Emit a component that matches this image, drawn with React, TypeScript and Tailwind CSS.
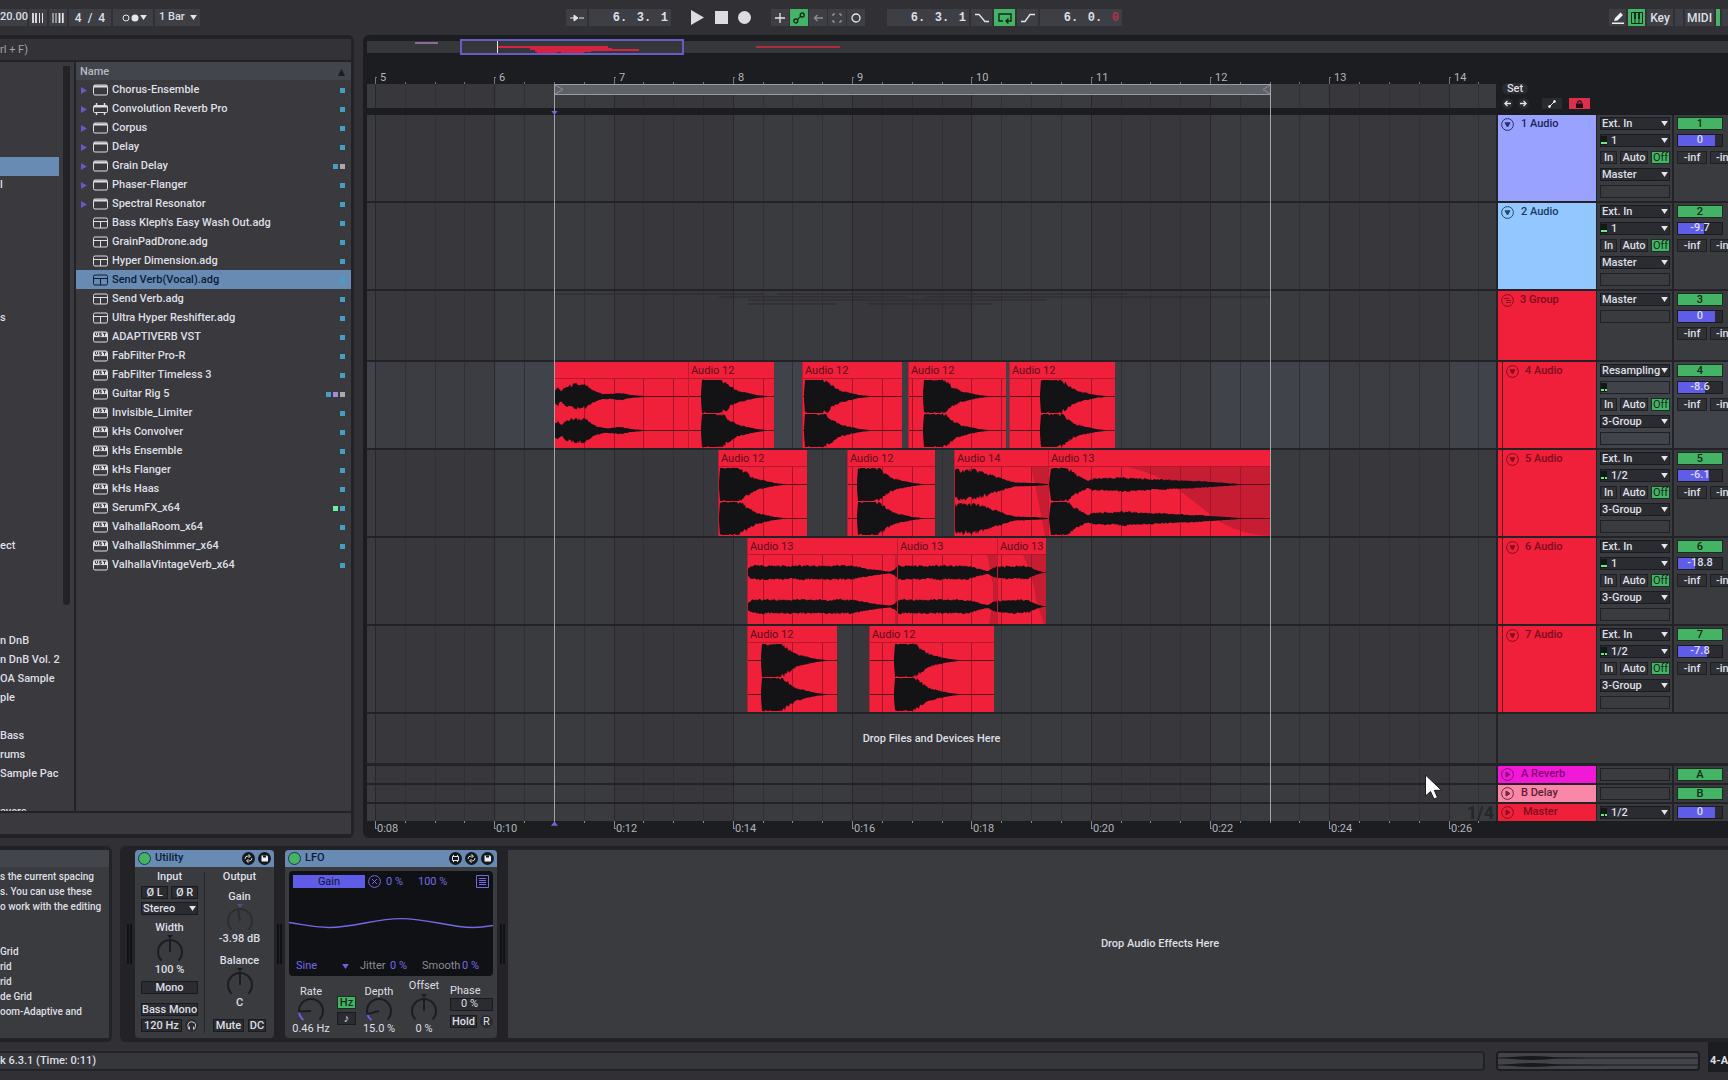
import type { ReactNode } from "react";
import clsx from "clsx";

// timeline scale: px of bar 5 from the lane's left edge, and px per beat
const ORIGIN = 9;
const BEAT = 29.82;
const BEATS = Array.from({ length: 40 }, (_, i) => i);

type Point = [number, number];

interface Clip {
  name?: string;
  x: number;
  w: number;
  wave: Point[];
  fades?: string[];
}

interface Track {
  name: string;
  num: string;
  tone: string;
  kind: "audio" | "group";
  sub?: boolean;
  input?: string;
  channel?: string;
  output: string;
  volume: string;
  level: number;
  clips?: Clip[];
}

const burst = (at: number): Point[] => [
  [at, 3],
  [at + 1, 17],
  [at + 17, 17],
  [at + 24, 13],
  [at + 31, 8],
  [at + 37, 5],
  [at + 46, 3],
  [at + 56, 1],
  [at + 66, 0],
];

const tracks: Track[] = [
  { name: "1 Audio", num: "1", tone: "bg-[#9aa2ff] text-[#20245c]", kind: "audio", input: "Ext. In", channel: "1", output: "Master", volume: "0", level: 84 },
  { name: "2 Audio", num: "2", tone: "bg-[#92c8ff] text-[#1b3a5c]", kind: "audio", input: "Ext. In", channel: "1", output: "Master", volume: "-9.7", level: 60 },
  { name: "3 Group", num: "3", tone: "bg-[#f0203a] text-[#7c0d1c]", kind: "group", output: "Master", volume: "0", level: 84 },
  {
    name: "4 Audio",
    num: "4",
    tone: "bg-[#f0203a] text-[#7c0d1c]",
    kind: "audio",
    sub: true,
    input: "Resampling",
    channel: "",
    output: "3-Group",
    volume: "-8.6",
    level: 62,
    clips: [
      { x: 187, w: 134, wave: [[0, 6], [3, 8], [6, 5], [12, 9], [20, 11], [31, 10], [38, 5], [48, 2], [56, 2], [65, 3], [76, 1], [90, 0]] },
      { name: "Audio 12", x: 321, w: 86, wave: burst(12) },
      { name: "Audio 12", x: 435, w: 100, wave: burst(1) },
      { name: "Audio 12", x: 541, w: 98, wave: burst(14) },
      { name: "Audio 12", x: 642, w: 106, wave: burst(30) },
    ],
  },
  {
    name: "5 Audio",
    num: "5",
    tone: "bg-[#f0203a] text-[#7c0d1c]",
    kind: "audio",
    sub: true,
    input: "Ext. In",
    channel: "1/2",
    output: "3-Group",
    volume: "-6.1",
    level: 70,
    clips: [
      { name: "Audio 12", x: 351, w: 89, wave: burst(0) },
      { name: "Audio 12", x: 480, w: 88, wave: burst(9) },
      { name: "Audio 14", x: 587, w: 94, wave: [[0, 13], [20, 13], [28, 11], [38, 8], [50, 4], [60, 1.5], [80, 1], [93, 0]], fades: ["M76 0 Q83 30 90 69 H94 V0Z"] },
      {
        name: "Audio 13",
        x: 681,
        w: 222,
        wave: [[0, 0], [2, 17], [16, 17], [24, 11], [32, 6], [39, 3], [44, 5], [75, 6], [118, 4], [145, 3], [170, 1.5], [192, 0]],
        fades: ["M79 0 Q110 7 130 23 L171 55 Q195 68 222 69 V0Z"],
      },
    ],
  },
  {
    name: "6 Audio",
    num: "6",
    tone: "bg-[#f0203a] text-[#7c0d1c]",
    kind: "audio",
    sub: true,
    input: "Ext. In",
    channel: "1",
    output: "3-Group",
    volume: "-18.8",
    level: 39,
    clips: [
      { name: "Audio 13", x: 380, w: 150, wave: [[0, 3], [3, 6], [105, 6], [115, 4], [128, 2], [142, 0.5], [146, 2], [150, 6]], fades: ["M147 0 H150 V69 H147Z"] },
      { name: "Audio 13", x: 530, w: 100, wave: [[0, 6], [70, 6], [80, 3], [90, 1], [95, 4], [100, 5]], fades: ["M89 0 L95 30 V45 L91 69 H100 V0Z"] },
      { name: "Audio 13", x: 630, w: 49, wave: [[0, 5], [18, 6], [31, 5], [38, 2], [45, 0]], fades: ["M25 0 Q36 22 38 45 L46 69 H49 V0Z"] },
    ],
  },
  {
    name: "7 Audio",
    num: "7",
    tone: "bg-[#f0203a] text-[#7c0d1c]",
    kind: "audio",
    sub: true,
    input: "Ext. In",
    channel: "1/2",
    output: "3-Group",
    volume: "-7.8",
    level: 65,
    clips: [
      { name: "Audio 12", x: 380, w: 90, wave: burst(13) },
      { name: "Audio 12", x: 502, w: 125, wave: burst(24) },
    ],
  },
];

const returns = [
  { name: "A Reverb", num: "A", tone: "bg-[#f218d8] text-[#7f0a70]" },
  { name: "B Delay", num: "B", tone: "bg-[#f987a8] text-[#5e1c31]" },
];

const devices: { name: string; icon: "device" | "max" | "rack" | "vst"; tags?: string[] }[] = [
  { name: "Chorus-Ensemble", icon: "device" },
  { name: "Convolution Reverb Pro", icon: "max" },
  { name: "Corpus", icon: "device" },
  { name: "Delay", icon: "device" },
  { name: "Grain Delay", icon: "device", tags: ["bg-[#429fc6]", "bg-[#aaaaaa]"] },
  { name: "Phaser-Flanger", icon: "device" },
  { name: "Spectral Resonator", icon: "device" },
  { name: "Bass Kleph's Easy Wash Out.adg", icon: "rack" },
  { name: "GrainPadDrone.adg", icon: "rack" },
  { name: "Hyper Dimension.adg", icon: "rack" },
  { name: "Send Verb(Vocal).adg", icon: "rack" },
  { name: "Send Verb.adg", icon: "rack" },
  { name: "Ultra Hyper Reshifter.adg", icon: "rack" },
  { name: "ADAPTIVERB VST", icon: "vst" },
  { name: "FabFilter Pro-R", icon: "vst" },
  { name: "FabFilter Timeless 3", icon: "vst" },
  { name: "Guitar Rig 5", icon: "vst", tags: ["bg-[#429fc6]", "bg-[#a988dc]", "bg-[#aaaaaa]"] },
  { name: "Invisible_Limiter", icon: "vst" },
  { name: "kHs Convolver", icon: "vst" },
  { name: "kHs Ensemble", icon: "vst" },
  { name: "kHs Flanger", icon: "vst" },
  { name: "kHs Haas", icon: "vst" },
  { name: "SerumFX_x64", icon: "vst", tags: ["bg-[#6df0a0]", "bg-[#429fc6]"] },
  { name: "ValhallaRoom_x64", icon: "vst" },
  { name: "ValhallaShimmer_x64", icon: "vst" },
  { name: "ValhallaVintageVerb_x64", icon: "vst" },
];

// sidebar labels by row; everything else in the list is scrolled out to the left
const places: Record<number, string> = {
  6: "l",
  13: "s",
  25: "ect",
  30: "n DnB",
  31: "n DnB Vol. 2",
  32: "OA Sample",
  33: "ple",
  35: "Bass",
  36: "rums",
  37: "Sample Pac",
  39: "ayers",
};

function noise(i: number) {
  const v = Math.sin(i * 12.9898) * 43758.5453;
  return v - Math.floor(v);
}

function wavePath(points: Point[], cy: number, seed: number) {
  const last = points[points.length - 1][0];
  const top: string[] = [];
  const bottom: string[] = [];
  for (let x = points[0][0]; x <= last; x += 1) {
    let i = 0;
    while (i < points.length - 2 && points[i + 1][0] < x) i++;
    const [x0, a0] = points[i];
    const [x1, a1] = points[i + 1];
    const amp = a0 + ((a1 - a0) * (x - x0)) / (x1 - x0);
    const up = Math.min(16.5, amp * (0.86 + 0.36 * noise(x + seed)) + 0.4);
    const down = Math.min(16.5, amp * (0.86 + 0.36 * noise(x + seed + 77)) + 0.4);
    top.push(`${x} ${(cy - up).toFixed(1)}`);
    bottom.unshift(`${x} ${(cy + down).toFixed(1)}`);
  }
  return `M${top.join("L")}L${bottom.join("L")}Z`;
}

function Caret({ className = "fill-[#e6e6ea]" }: { className?: string }) {
  return (
    <svg viewBox="0 0 8 6" className={clsx("h-[5px] w-[7px] shrink-0", className)}>
      <path d="M0 0H8L4 6Z" />
    </svg>
  );
}

function DeviceIcon({ kind }: { kind: string }) {
  return (
    <svg viewBox="0 0 15 12" className="h-3 w-[15px] shrink-0 fill-none stroke-current">
      {kind === "max" ? (
        <>
          <rect x=".5" y="2.5" width="14" height="7" rx="1" />
          <path d="M1 3.5H14" strokeWidth="2" />
          <path d="M3.5 0V2M11.5 0V2M3.5 10V12M11.5 10V12" strokeWidth="1.4" />
        </>
      ) : (
        <rect x=".5" y="1" width="14" height="10" rx="1.5" />
      )}
      {kind === "device" && <path d="M1 2.5H14" strokeWidth="2" />}
      {kind === "rack" && <path d="M1 4.5H14M7.5 4.5V11" />}
      {kind === "vst" && (
        <>
          <path d="M1 3.8H14" strokeWidth="4.6" />
          <path d="M2.5 2V4L3.5 5L4.5 4V2M8.5 2.4H6.5V3.7H8.3V5H6.3M10 2.4H13M11.5 2.4V5.2" className="stroke-[#2a2a2f]" strokeWidth=".9" />
        </>
      )}
    </svg>
  );
}

function ToolBox({ children, className, label }: { children?: ReactNode; className?: string; label?: string }) {
  return (
    <button aria-label={label} className={clsx("flex h-[17px] items-center justify-center", className ?? "w-[18px] bg-[#3d3f45]")}>
      {children}
    </button>
  );
}

function Position({ values, red }: { values: string[]; red?: boolean }) {
  return (
    <div className="flex h-[17px] w-[82px] items-center justify-end bg-[#3d3f45] pt-px pr-[3px] font-['Liberation_Mono',monospace] text-xs font-bold">
      {values.map((v, i) => (
        <span key={i} className={clsx(i < 2 && "w-6", red && i === 2 && "text-[#b8304a]")}>
          {v}
        </span>
      ))}
    </div>
  );
}

function Toolbar() {
  return (
    <header className="grid h-[35px] shrink-0 grid-cols-[1fr_auto_1fr] items-center text-xs font-medium">
      <div className="flex gap-0.5">
        <span className="flex h-[17px] w-[27px] items-center bg-[#3d3f45] text-[11px]">20.00</span>
        <ToolBox label="Nudge down">
          <svg viewBox="0 0 12 10" className="h-2.5 w-3 stroke-[#e6e6ea]">
            <path d="M1 0V10M4 0V10" strokeWidth="1.8" />
            <path d="M7.5 0V10M10.5 0V10" />
          </svg>
        </ToolBox>
        <ToolBox label="Nudge up">
          <svg viewBox="0 0 12 10" className="h-2.5 w-3 stroke-[#e6e6ea]">
            <path d="M1 0V10M4 0V10" />
            <path d="M7.5 0V10M10.8 0V10" strokeWidth="1.8" />
          </svg>
        </ToolBox>
        <span className="flex h-[17px] w-[42px] items-center justify-center gap-1.5 bg-[#3d3f45]">
          <span>4</span>
          <span>/</span>
          <span>4</span>
        </span>
        <ToolBox label="Metronome" className="w-10 justify-between bg-[#3d3f45] px-1">
          <svg viewBox="0 0 18 8" className="ml-0.5 h-2 w-[18px]">
            <circle cx="4" cy="4" r="3" className="fill-none stroke-[#e6e6ea]" />
            <circle cx="13" cy="4" r="3.5" className="fill-[#e6e6ea]" />
          </svg>
          <Caret />
        </ToolBox>
        <label className="relative flex h-[17px] w-[45px] items-center bg-[#3d3f45]">
          <select aria-label="Quantization" className="w-full appearance-none bg-transparent pl-1 text-[11px] font-medium outline-none">
            <option>1 Bar</option>
          </select>
          <span className="pointer-events-none absolute right-[3px]">
            <Caret />
          </span>
        </label>
      </div>

      <div className="mr-10 flex items-center">
        <ToolBox label="Follow" className="mr-0.5 w-[21px] bg-[#3d3f45]">
          <svg viewBox="0 0 16 8" className="h-2 w-4 fill-[#e6e6ea] stroke-[#e6e6ea]">
            <path d="M1 4H6M10 4H16" strokeDasharray="5 4 2 1 2" />
            <path d="M5 1L9 4L5 7Z" />
          </svg>
        </ToolBox>
        <Position values={["6.", "3.", "1"]} />
        <button aria-label="Play" className="ml-5">
          <svg viewBox="0 0 13 15" className="h-[15px] w-[13px] fill-[#dcdce2]">
            <path d="M0 0L13 7.5L0 15Z" />
          </svg>
        </button>
        <button aria-label="Stop" className="ml-[11px] size-[13px] bg-[#dcdce2]" />
        <button aria-label="Record" className="ml-2.5 size-[13px] rounded-full bg-[#dcdce2]" />
        <div className="ml-5 flex gap-px">
          <ToolBox label="Overdub">
            <svg viewBox="0 0 10 10" className="size-2.5 stroke-[#e6e6ea]">
              <path d="M5 0V10M0 5H10" strokeWidth="1.3" />
            </svg>
          </ToolBox>
          <ToolBox label="Automation arm" className="w-[18px] bg-[#45b365]">
            <svg viewBox="0 0 12 12" className="size-3 fill-none stroke-[#0f2b17]" strokeWidth="1.3">
              <circle cx="2.8" cy="9" r="2" />
              <circle cx="9.2" cy="3" r="2" />
              <path d="M4.3 7.6L7.7 4.4" />
            </svg>
          </ToolBox>
          <ToolBox label="Re-enable automation">
            <svg viewBox="0 0 10 8" className="h-2 w-2.5 fill-none stroke-[#8b8c92]">
              <path d="M10 4H2M4.5 1L1.5 4L4.5 7" strokeWidth="1.4" />
            </svg>
          </ToolBox>
          <ToolBox label="Capture">
            <svg viewBox="0 0 10 10" className="size-2.5 fill-none stroke-[#a9aab0]">
              <path d="M1 3V1H3M7 1H9V3M9 7V9H7M3 9H1V7" />
            </svg>
          </ToolBox>
          <ToolBox label="Session record">
            <svg viewBox="0 0 10 10" className="size-2.5 fill-none stroke-[#e6e6ea]">
              <circle cx="5" cy="5" r="4" strokeWidth="1.3" />
            </svg>
          </ToolBox>
        </div>
        <div className="ml-[22px] flex gap-0.5">
          <Position values={["6.", "3.", "1"]} />
          <ToolBox label="Punch in" className="w-[21px] bg-[#3d3f45]">
            <svg viewBox="0 0 14 10" className="h-2.5 w-3.5 fill-none stroke-[#e6e6ea]" strokeWidth="1.3">
              <path d="M0 1.5H4L10 8.5H14" />
            </svg>
          </ToolBox>
          <ToolBox label="Loop" className="w-[21px] bg-[#45b365]">
            <svg viewBox="0 0 14 12" className="h-3 w-3.5 fill-none stroke-[#0f2b17]" strokeWidth="1.4">
              <path d="M5 9H1V2H13V9H8M10.5 6.5L8 9L10.5 11.5" />
            </svg>
          </ToolBox>
          <ToolBox label="Punch out" className="w-[21px] bg-[#3d3f45]">
            <svg viewBox="0 0 14 10" className="h-2.5 w-3.5 fill-none stroke-[#e6e6ea]" strokeWidth="1.3">
              <path d="M0 8.5H4L9 1.5H14" />
            </svg>
          </ToolBox>
          <Position values={["6.", "0.", "0"]} red />
        </div>
      </div>

      <div className="flex justify-end gap-0.5">
        <ToolBox label="Draw mode" className="w-[17px] bg-[#3d3f45]">
          <svg viewBox="0 0 12 12" className="size-3 fill-[#f0f0f4]">
            <path d="M2 9L3 6L8.5 .5L11 3L5.5 8.5ZM0 10.5H12V12H0Z" />
          </svg>
        </ToolBox>
        <ToolBox label="Computer keyboard" className="w-[17px] bg-[#45b365]">
          <svg viewBox="0 0 12 12" className="size-3 fill-none stroke-[#0f2b17]">
            <path d="M.5 .5H11.5V11.5H.5ZM4 6V11.5M8 6V11.5" />
            <path d="M4 1V7M8 1V7" strokeWidth="2" />
          </svg>
        </ToolBox>
        <ToolBox className="w-[26px] bg-[#3d3f45]">Key</ToolBox>
        <span className="h-[17px] w-2 bg-[#3d3f45]" />
        <ToolBox className="w-[29px] bg-[#3d3f45]">MIDI</ToolBox>
        <span className="h-[17px] w-1 bg-[#45b365]" />
        <span className="h-[17px] w-1.5 bg-[#3d3f45]" />
      </div>
    </header>
  );
}

function Browser() {
  return (
    <aside className="flex w-[354px] shrink-0 flex-col rounded-r-md bg-[#222227] pt-1 pr-[3px] pb-1">
      <input
        aria-label="Search"
        placeholder="rl + F)"
        className="mb-0.5 h-[21px] w-full bg-[#323237] text-[11px] outline-none placeholder:text-[#a2a3a8]"
      />
      <div className="flex min-h-0 flex-1 border-b-2 border-[#222227]">
        <nav className="h-full w-[62px] overflow-hidden bg-[#39393e] pr-[3px]">
          <ul className="text-[11px] font-medium">
            {Array.from({ length: 40 }, (_, i) => (
              <li key={i} className={clsx("h-[19px] leading-[18px] whitespace-nowrap", i === 5 && "bg-[#688bb3]")}>
                {places[i]}
              </li>
            ))}
          </ul>
        </nav>
        <div className="w-3 bg-[#39393e] pt-1">
          <div className="ml-px h-[539px] w-[7px] rounded-b-md bg-[#222227]" />
        </div>
        <div className="ml-0.5 min-w-0 flex-1 bg-[#39393e]">
          <div className="flex h-[18px] items-center justify-between bg-[#42454c] pt-0.5 pr-1.5 pl-1 text-[11px] font-medium text-[#b9bac0]">
            Name
            <svg viewBox="0 0 8 8" className="size-[7px] fill-[#1c1d21]">
              <path d="M4 0L8 8H0Z" />
            </svg>
          </div>
          <ul className="text-[11px] font-medium">
            {devices.map((d) => {
              const selected = d.name === "Send Verb(Vocal).adg";
              const folder = d.icon === "device" || d.icon === "max";
              return (
                <li key={d.name} className={clsx("flex h-[19px] items-center pt-px pr-1.5 pl-[5px]", selected && "bg-[#688bb3] text-[#0c1c38]")}>
                  <span className="w-3">
                    {folder && (
                      <svg viewBox="0 0 6 7" className="h-[7px] w-1.5 fill-[#655bc4]">
                        <path d="M0 0L6 3.5L0 7Z" />
                      </svg>
                    )}
                  </span>
                  <DeviceIcon kind={d.icon} />
                  <span className="ml-1 flex-1 whitespace-nowrap">{d.name}</span>
                  <span className="flex gap-0.5">
                    {(d.tags ?? ["bg-[#429fc6]"]).map((t) => (
                      <span key={t} className={clsx("size-[5px]", t)} />
                    ))}
                  </span>
                </li>
              );
            })}
          </ul>
        </div>
      </div>
      <div className="h-[21px] bg-[#39393e]" />
    </aside>
  );
}

function Grid({ light }: { light?: boolean }) {
  return (
    <svg className={clsx("absolute inset-0 h-full w-full", light ? "bg-[#40444a]" : "bg-[#3a3b3f]")}>
      {[0, 2, 4, 6, 8].map((b) => (
        <rect key={b} x={ORIGIN + b * 4 * BEAT} y="0" width={4 * BEAT} height="100%" className="fill-[#333237]/35" />
      ))}
      {BEATS.map((b) => (
        <rect
          key={b}
          x={Math.round(ORIGIN + b * BEAT) - 1}
          y="0"
          width="1"
          height="100%"
          className={b % 4 ? "fill-[#303035]" : "fill-[#27272c]"}
        />
      ))}
    </svg>
  );
}

function ClipView({ clip, seed }: { clip: Clip; seed: number }) {
  return (
    <div
      className="absolute top-0 bottom-0 overflow-hidden border-l border-[#c01a30] bg-[#f0203a]"
      style={{ left: clip.x, width: clip.w }}
    >
      <div className="h-[17px] border-b border-[#b5182c] pl-0.5 text-[11px] leading-[18px] whitespace-nowrap text-[#5c0d19]">{clip.name}</div>
      <svg viewBox={`0 0 ${clip.w} 69`} className="block h-[69px]" width={clip.w}>
        {clip.fades?.map((d) => (
          <path key={d} d={d} className="fill-[#c61d33]" />
        ))}
        {BEATS.map((b) => {
          const x = Math.round(ORIGIN + b * BEAT) - clip.x - 2;
          return x > 0 && x < clip.w ? <rect key={b} x={x} y="0" width="1" height="69" className="fill-[#a5152a]" /> : null;
        })}
        <path d={`M0 17.5H${clip.w}M0 51.5H${clip.w}`} className="stroke-[#55101a]" />
        <path d={wavePath(clip.wave, 17.5, seed)} className="fill-[#131316]" />
        <path d={wavePath(clip.wave, 51.5, seed + 40)} className="fill-[#131316]" />
      </svg>
    </div>
  );
}

function FoldIcon({ kind }: { kind: "down" | "group" | "right" }) {
  return (
    <svg viewBox="0 0 13 13" className="size-[13px] shrink-0 fill-none stroke-current opacity-90">
      <circle cx="6.5" cy="6.5" r="5.9" />
      {kind === "down" && <path d="M4 4.8H9L6.5 9Z" className="fill-current" />}
      {kind === "right" && <path d="M5 4V9L9 6.5Z" className="fill-current" />}
      {kind === "group" && <path d="M3 4.5H8M5 6.5H10M5 8.5H10" />}
    </svg>
  );
}

function Dropdown({ value, label, meter, className }: { value: string; label: string; meter?: number; className?: string }) {
  return (
    <label className={clsx("relative flex h-[13px] items-center border border-[#1a1b1f] bg-[#2b2c31]", className ?? "w-[70px]")}>
      {meter !== undefined && <Meter channels={meter} />}
      <select
        aria-label={label}
        className={clsx("h-full min-w-0 flex-1 appearance-none bg-transparent text-[11px] leading-[11px] font-medium outline-none", meter ? "pl-1" : "pl-px")}
      >
        <option>{value}</option>
      </select>
      <span className="pointer-events-none absolute right-px flex">
        <Caret />
      </span>
    </label>
  );
}

function Meter({ channels }: { channels: number }) {
  return (
    <span className="flex h-[9px] w-1.5 shrink-0 items-end gap-px bg-[#0e1a12] pb-px">
      {Array.from({ length: channels }, (_, i) => (
        <span key={i} className="h-0.5 flex-1 bg-[#6ee887]" />
      ))}
    </span>
  );
}

function EmptyField() {
  return <div className="h-[13px] w-[70px] border border-[#1f2024]" />;
}

function Volume({ value, level, label }: { value: string; level: number; label: string }) {
  return (
    <div className="relative h-[13px] w-[46px] border border-[#1a1b1f] bg-[#2b2c31]">
      <div className="h-full bg-[#5f5ce8]" style={{ width: `${level}%` }} />
      <input
        aria-label={label}
        defaultValue={value}
        className="absolute inset-0 w-full bg-transparent text-center text-[11px] font-medium text-[#dcdcf4] outline-none"
      />
    </div>
  );
}

function Activator({ children }: { children: ReactNode }) {
  return <button className="h-[13px] w-[46px] border border-[#15301c] bg-[#45b365] text-[11px] leading-[11px] font-medium text-[#0f2b17]">{children}</button>;
}

function TrackRow({ track, seed }: { track: Track; seed: number }) {
  const armed = track.name === "4 Audio";
  const cell = armed ? "bg-[#40444a]" : "bg-[#3a3b3f]";
  const small = "h-[13px] border border-[#1f2024] bg-[#303136] text-[11px] leading-[11px] font-medium";
  return (
    <div className={clsx("flex shrink-0 border-b-2 border-[#222227]", track.kind === "group" ? "h-[71px]" : "h-[88px]")}>
      <div className="relative min-w-0 flex-1 overflow-hidden">
        <Grid light={armed} />
        {track.kind === "group" && (
          <svg className="absolute inset-0 h-full w-full fill-[#2c2c31]/60">
            <path d="M188 2H396V4H188ZM410 2H760V4H410ZM352 5H540V7H352ZM560 5H903V7H560ZM381 8H680V10H381ZM381 12H470V14H381ZM502 12H626V14H502Z" />
          </svg>
        )}
        {track.clips?.map((c, i) => <ClipView key={i} clip={c} seed={seed * 100 + i * 13} />)}
      </div>
      <div className={clsx("ml-0.5 flex w-[98px] shrink-0", track.tone)}>
        {track.sub && <div className="w-[5px] shrink-0 border-r border-[#5c0d19]" />}
        <div className={clsx("flex h-[18px] items-center pl-[3px] text-[11px] font-medium whitespace-nowrap", track.tone.includes("f0203a") ? "gap-1.5" : "gap-[7px]")}>
          <FoldIcon kind={track.kind === "group" ? "group" : "down"} />
          {track.name}
        </div>
      </div>
      <div className={clsx("ml-px flex w-[75px] shrink-0 flex-col gap-1 pt-0.5 pl-[3px]", cell)}>
        {track.kind === "group" ? (
          <>
            <Dropdown value={track.output} label={`${track.name} output`} />
            <EmptyField />
          </>
        ) : (
          <>
            <Dropdown value={track.input!} label={`${track.name} input`} />
            {track.channel ? (
              <Dropdown value={track.channel} label={`${track.name} channel`} meter={track.channel === "1" ? 1 : 2} />
            ) : (
              <div className="flex h-[13px] w-[70px] items-center border border-[#1f2024]">
                <Meter channels={2} />
              </div>
            )}
            <div className="flex w-[70px] justify-between">
              <button className={clsx(small, "w-[17px]")}>In</button>
              <button className={clsx(small, "w-7")}>Auto</button>
              <button className="h-[13px] w-[19px] border border-[#15301c] bg-[#45b365] text-[11px] leading-[11px] text-[#0f2b17]">Off</button>
            </div>
            <Dropdown value={track.output} label={`${track.name} output`} />
            <EmptyField />
          </>
        )}
      </div>
      <div className={clsx("ml-0.5 flex w-[54px] shrink-0 flex-col gap-1 overflow-hidden pt-0.5 pl-[3px]", cell)}>
        <Activator>{track.num}</Activator>
        <Volume value={track.volume} level={track.level} label={`${track.name} volume`} />
        <div className="flex w-[63px] gap-[3px]">
          <div className={clsx(small, "w-[30px] text-center")}>-inf</div>
          <div className={clsx(small, "w-[30px] pl-[5px]")}>-in</div>
        </div>
      </div>
    </div>
  );
}

function ThinRow({ name, tone, children, last, mixer }: { name: string; tone: string; children: ReactNode; mixer: ReactNode; last?: boolean }) {
  return (
    <div className={clsx("flex shrink-0 border-[#222227]", last ? "h-[17px]" : "h-[19px] border-b-2")}>
      <div className="relative min-w-0 flex-1 overflow-hidden">
        <Grid />
        {last && <span className="absolute right-0.5 bottom-0 text-lg leading-[17px] font-bold text-[#25262a]">1/4</span>}
      </div>
      <div className={clsx("ml-0.5 flex w-[98px] shrink-0 items-center pl-[3px] text-[11px] font-medium", tone, last ? "gap-[9px]" : "gap-[7px]")}>
        <FoldIcon kind="right" />
        {name}
      </div>
      <div className="ml-px flex w-[75px] shrink-0 items-center bg-[#3a3b3f] pl-[3px]">{children}</div>
      <div className="ml-0.5 flex w-[54px] shrink-0 items-center bg-[#3a3b3f] pl-[3px]">{mixer}</div>
    </div>
  );
}

function Overview() {
  return (
    <div className="relative h-3 shrink-0 bg-[#36373b]">
      <svg className="absolute -top-1 left-0 h-5 w-full">
        <rect x="48" y="5" width="23" height="2" className="fill-[#8e6a96]" />
        <rect x="389" y="9" width="84" height="2" className="fill-[#b02c40]" />
        <path
          d="M130 9H241V11H130ZM163 11H245V13H163ZM200 12H272V14H200ZM168 13H224V15H168ZM170 15H190V17H170ZM194 15H217V17H194ZM150 9H175V11H150Z"
          className="fill-[#d42440]"
        />
        <rect x="130" y="3" width="1" height="14" className="fill-[#e6e6ea]" />
        <rect x="94" y="3" width="222" height="14" className="fill-none stroke-[#665cc8]" strokeWidth="2" />
      </svg>
    </div>
  );
}

function Ruler() {
  return (
    <div className="flex h-[62px] shrink-0">
      <div className="relative flex min-w-0 flex-1 flex-col overflow-hidden">
        <div className="relative h-[31px]">
          <svg className="absolute inset-0 h-full w-full fill-[#77787e]">
            {BEATS.map((b) => {
              const x = Math.round(ORIGIN + b * BEAT) - 1;
              return b % 4 ? <rect key={b} x={x} y="29" width="1" height="2" /> : <path key={b} d={`M${x} 24H${x + 2}V25H${x + 1}V31H${x}Z`} />;
            })}
          </svg>
          {[5, 6, 7, 8, 9, 10, 11, 12, 13, 14].map((bar, i) => (
            <span
              key={bar}
              className="absolute bottom-0 text-[11px] leading-3 text-[#b3b4b9]"
              style={{ left: Math.round(ORIGIN + i * 4 * BEAT) + 4 }}
            >
              {bar}
            </span>
          ))}
        </div>
        <div className="relative h-6 overflow-hidden">
          <Grid />
          <div className="absolute top-0 left-[187px] flex h-[11px] w-[717px] items-center justify-between border-y border-[#9a9ca4] bg-[#5e6168]">
            <svg viewBox="0 0 10 9" className="h-[9px] w-2.5 fill-none stroke-[#8f9199]">
              <path d="M1 0L9 4.5L1 9" />
            </svg>
            <svg viewBox="0 0 10 9" className="h-[9px] w-2.5 fill-none stroke-[#8f9199]">
              <path d="M9 0L2 4.5L9 9" />
            </svg>
          </div>
        </div>
      </div>
      <div className="ml-0.5 w-[230px] pt-[30px] pl-1">
        <button className="block h-[11px] w-[26px] rounded-full bg-[#2a2b2f] text-[11px] leading-[11px] font-medium">Set</button>
        <div className="mt-1 flex h-[11px] items-center text-[#e6e6ea]">
          <button aria-label="Previous locator" className="flex size-[11px] items-center justify-center rounded-full bg-[#2a2b2f]">
            <svg viewBox="0 0 8 8" className="size-[7px] fill-none stroke-current" strokeWidth="1.6">
              <path d="M8 4H1.5M4 1L1 4L4 7" />
            </svg>
          </button>
          <button aria-label="Next locator" className="ml-[5px] flex size-[11px] items-center justify-center rounded-full bg-[#2a2b2f]">
            <svg viewBox="0 0 8 8" className="size-[7px] fill-none stroke-current" strokeWidth="1.6">
              <path d="M0 4H6.5M4 1L7 4L4 7" />
            </svg>
          </button>
          <button aria-label="Automation mode" className="ml-[13px] flex h-[11px] w-5 items-center justify-center bg-[#2a2b2f]">
            <svg viewBox="0 0 8 8" className="size-2 fill-current stroke-current">
              <path d="M1.5 6.5L6.5 1.5" />
              <circle cx="1.5" cy="6.5" r="1" />
              <circle cx="6.5" cy="1.5" r="1" />
            </svg>
          </button>
          <button aria-label="Lock envelopes" className="ml-[7px] flex h-[11px] w-[21px] items-center justify-center bg-[#dc2f4c]">
            <svg viewBox="0 0 8 9" className="h-2 w-[7px] fill-[#1c1015]">
              <path d="M0 4H8V9H0Z" />
              <path d="M2 4V2.5Q2 1 4 1T6 2.5V4" className="fill-none stroke-[#1c1015]" strokeWidth="1.3" />
            </svg>
          </button>
        </div>
      </div>
    </div>
  );
}

function TimeRuler() {
  return (
    <div className="relative h-[17px] shrink-0 overflow-hidden">
      <svg className="absolute inset-0 h-full w-full fill-[#8b8c92]">
        {BEATS.slice(0, 38).map((b) => {
          const x = Math.round(ORIGIN + b * BEAT) - 1;
          return b % 4 ? <rect key={b} x={x} y="0" width="1" height="2" /> : <path key={b} d={`M${x} 0H${x + 1}V7H${x + 2}V8H${x}Z`} />;
        })}
      </svg>
      {["0:08", "0:10", "0:12", "0:14", "0:16", "0:18", "0:20", "0:22", "0:24", "0:26"].map((t, i) => (
        <span key={t} className="absolute top-px text-[11px] leading-[14px] text-[#b3b4b9]" style={{ left: Math.round(ORIGIN + i * 4 * BEAT) + 1 }}>
          {t}
        </span>
      ))}
    </div>
  );
}

function Arrangement() {
  return (
    <main className="relative ml-[9px] flex min-w-0 flex-1 flex-col overflow-hidden rounded-l-md bg-[#1c1d21] pt-1.5 pl-1">
      <Overview />
      <Ruler />
      <div className="flex min-h-0 flex-1 flex-col bg-[#222227]">
        {tracks.map((t, i) => (
          <TrackRow key={t.name} track={t} seed={i} />
        ))}
        <div className="flex min-h-0 flex-1 border-b-[3px] border-[#222227]">
          <div className="relative flex min-w-0 flex-1 items-center justify-center overflow-hidden pt-0.5">
            <Grid />
            <span className="relative text-[11px] font-medium">Drop Files and Devices Here</span>
          </div>
          <div className="ml-0.5 w-[230px] shrink-0 bg-[#3a3b3f]" />
        </div>
        {returns.map((r) => (
          <ThinRow key={r.name} name={r.name} tone={r.tone} mixer={<Activator>{r.num}</Activator>}>
            <EmptyField />
          </ThinRow>
        ))}
        <ThinRow name="Master" tone="bg-[#f0203a] text-[#7c0d1c]" last mixer={<Volume value="0" level={84} label="Master volume" />}>
          <Dropdown value="1/2" label="Master output" meter={2} />
        </ThinRow>
      </div>
      <TimeRuler />

      {/* insert marker and loop end */}
      <div className="pointer-events-none absolute top-[49px] bottom-[17px] left-[191px] w-px bg-[#a4a5aa]" />
      <div className="pointer-events-none absolute top-[49px] bottom-[17px] left-[907px] w-px bg-[#a4a5aa]" />
      <svg viewBox="0 0 8 5" className="pointer-events-none absolute top-[76px] left-[188px] h-1 w-[7px] fill-[#6f66d8]">
        <path d="M0 0H8L4 5Z" />
      </svg>
      <svg viewBox="0 0 8 5" className="pointer-events-none absolute bottom-3 left-[188px] h-[5px] w-[7px] fill-[#6f66d8]">
        <path d="M0 5H8L4 0Z" />
      </svg>
      <svg viewBox="0 0 17 26" className="pointer-events-none absolute top-[739px] left-[1062px] h-[26px] w-[17px] fill-white stroke-[#1c1d21]">
        <path d="M.5 1V22L5.5 17.5L9 25L12.5 23.5L9.3 16.3H16.5Z" />
      </svg>
    </main>
  );
}

function Knob({ angle = 0, arc, faint, marker }: { angle?: number; arc?: string; faint?: boolean; marker?: boolean }) {
  return (
    <svg viewBox="0 0 30 27" className={clsx("block h-[27px] w-[30px] shrink-0 fill-none stroke-[#1c1d21] stroke-2", faint && "opacity-45")}>
      <path d="M6.5 25.5A12 12 0 1 1 23.5 25.5" />
      {arc && <path d={arc} className="stroke-[#6a62e0]" />}
      <path d="M15 17V6" transform={`rotate(${angle} 15 17)`} />
      {marker && <path d="M12 0H18L15 4Z" className={faint ? "fill-[#6a62e0] stroke-none" : "fill-[#1c1d21] stroke-none"} />}
    </svg>
  );
}

function PadButton({ children, className }: { children: ReactNode; className?: string }) {
  return (
    <button
      className={clsx("h-[13px] border text-[11px] leading-[11px] font-medium whitespace-nowrap", className, !className?.includes("bg-") && "border-[#1a1b1f] bg-[#2b2c31]")}
    >
      {children}
    </button>
  );
}

function DeviceHeader({ title, max }: { title: string; max?: boolean }) {
  return (
    <div className="flex h-[17px] shrink-0 items-center gap-[3px] rounded-t bg-[#688bb3] px-[3px] text-[11px] font-medium text-[#0c1c38]">
      <button aria-label={`${title} on`} className="mr-px size-[13px] rounded-full border border-[#1b3a4a] bg-[#45b365]" />
      <span className="flex-1">{title}</span>
      {max && (
        <svg viewBox="0 0 13 13" className="size-[13px]">
          <circle cx="6.5" cy="6.5" r="6.5" className="fill-[#16181f]" />
          <path d="M3.5 4.5H9.5V8.5H3.5ZM4.5 3V4.5M8.5 3V4.5M4.5 8.5V10M8.5 8.5V10" className="fill-none stroke-[#e6e6ea]" />
        </svg>
      )}
      <svg viewBox="0 0 13 13" className="size-[13px]">
        <circle cx="6.5" cy="6.5" r="6.5" className="fill-[#16181f]" />
        <path d="M3 7Q3 4 6 4L8 4M10 6Q10 9 7 9L5 9M6.5 2.5L8.5 4L6.5 6M6.5 7L4.5 9L6.5 10.5" className="fill-none stroke-[#d8d2c8]" />
      </svg>
      <svg viewBox="0 0 13 13" className="size-[13px]">
        <circle cx="6.5" cy="6.5" r="6.5" className="fill-[#16181f]" />
        <path d="M3.5 3.5H9L10 4.5V9.5H3.5Z" className="fill-[#f0f0f4]" />
        <path d="M5 3.5H8V5.5H5Z" className="fill-[#16181f]" />
      </svg>
    </div>
  );
}

function LevelStrip() {
  return (
    <div className="flex w-[11px] shrink-0 items-center justify-center gap-px">
      <span className="h-10 w-0.5 bg-[#101114]" />
      <span className="h-10 w-0.5 bg-[#101114]" />
    </div>
  );
}

function Utility() {
  return (
    <section className="flex w-[139px] shrink-0 flex-col rounded bg-[#3a3b3f] text-[11px] font-medium">
      <DeviceHeader title="Utility" />
      <div className="flex flex-1">
        <div className="flex w-[69px] flex-col items-center px-1.5">
          <h3 className="h-[18px] leading-5">Input</h3>
          <div className="mt-px flex w-full justify-between">
            <PadButton className="w-[27px]">Ø L</PadButton>
            <PadButton className="w-[27px]">Ø R</PadButton>
          </div>
          <Dropdown value="Stereo" label="Channel mode" className="mt-[3px] w-full" />
          <span className="mt-[5px] leading-[15px]">Width</span>
          <Knob marker />
          <span className="leading-[15px]">100 %</span>
          <PadButton className="mt-1 w-full">Mono</PadButton>
          <PadButton className="mt-[9px] w-full">Bass Mono</PadButton>
          <div className="mt-[3px] flex w-full items-center justify-between">
            <PadButton className="w-[41px]">120 Hz</PadButton>
            <button aria-label="Bass listen" className="size-[13px] rounded-full bg-[#2b2c31] p-0.5">
              <svg viewBox="0 0 9 9" className="size-[9px] fill-none stroke-[#c9c9ce]">
                <path d="M2.5 8H1.5Q0 3 2 1.5T7 1.5T7.5 8H6.5M2.5 5.5V8.5M6.5 5.5V8.5" />
              </svg>
            </button>
          </div>
        </div>
        <div className="my-[5px] w-px bg-[#222227]" />
        <div className="flex flex-1 flex-col items-center">
          <h3 className="h-[18px] leading-5">Output</h3>
          <span className="mt-1 leading-[15px]">Gain</span>
          <Knob marker faint angle={-10} />
          <span className="leading-[15px]">-3.98 dB</span>
          <span className="mt-[7px] leading-[15px]">Balance</span>
          <Knob marker />
          <span className="leading-[15px]">C</span>
          <div className="mt-[9px] flex w-full justify-between px-2">
            <PadButton className="w-[31px]">Mute</PadButton>
            <PadButton className="w-[18px]">DC</PadButton>
          </div>
        </div>
      </div>
    </section>
  );
}

function Lfo() {
  return (
    <section className="flex w-[212px] shrink-0 flex-col rounded bg-[#3a3b3f] text-[11px]">
      <DeviceHeader title="LFO" max />
      <div className="mx-1 mt-1 flex h-[105px] flex-col rounded-sm bg-[#101114] text-[#7169e6]">
        <div className="flex items-center px-1 pt-1">
          <button className="h-[13px] w-[72px] bg-[#5f5ce8] text-[11px] leading-[13px] text-[#14152a]">Gain</button>
          <svg viewBox="0 0 13 13" className="ml-[3px] size-[13px] fill-none stroke-current">
            <circle cx="6.5" cy="6.5" r="5.9" />
            <path d="M4 4L9 9M9 4L4 9" />
          </svg>
          <span className="ml-[5px] w-8 leading-[13px]">0 %</span>
          <span className="flex-1 leading-[13px]">100 %</span>
          <svg viewBox="0 0 13 13" className="size-[13px] fill-none stroke-current">
            <path d="M.5 .5H12.5V12.5H.5ZM3 3.5H10M3 5.5H10M3 7.5H10M3 9.5H10" />
          </svg>
        </div>
        <svg viewBox="0 0 204 72" preserveAspectRatio="none" className="min-h-0 w-full flex-1 fill-none stroke-current" strokeWidth="1.4">
          <path d="M0 35C14 37 24 40 40 40C66 40 86 31 112 31C140 31 160 40 184 40C192 40 198 39 204 38" />
        </svg>
        <div className="flex items-center pb-[3px] pl-[7px] leading-[14px] whitespace-nowrap">
          <span className="w-[46px]">Sine</span>
          <Caret className="mr-[11px] fill-[#6a62e0]" />
          <span className="w-[30px] text-[#8c8c94]">Jitter</span>
          <span className="w-8">0 %</span>
          <span className="w-10 text-[#8c8c94]">Smooth</span>
          <span>0 %</span>
        </div>
      </div>
      <div className="flex flex-1">
        <div className="mt-2 flex w-[52px] flex-col items-center">
          <span className="mb-[-5px] leading-[15px]">Rate</span>
          <Knob angle={-92} arc="M3 18.5A12 12 0 0 0 7.5 26" />
          <span className="leading-[15px] whitespace-nowrap">0.46 Hz</span>
        </div>
        <div className="mt-5 flex w-[19px] flex-col gap-[3px]">
          <PadButton className="w-[19px] border-[#15301c] bg-[#45b365] text-[#0f2b17]">Hz</PadButton>
          <PadButton className="w-[19px]">♪</PadButton>
        </div>
        <div className="mt-2 flex w-[46px] flex-col items-center">
          <span className="mb-[-5px] leading-[15px]">Depth</span>
          <Knob angle={-105} arc="M3.5 21A12 12 0 0 0 7.5 26" />
          <span className="leading-[15px] whitespace-nowrap">15.0 %</span>
        </div>
        <div className="mt-0.5 flex w-11 flex-col items-center">
          <span className="mb-px leading-[15px]">Offset</span>
          <Knob marker />
          <span className="leading-[15px]">0 %</span>
        </div>
        <div className="mt-2 ml-1 w-[43px]">
          <span className="block leading-[14px]">Phase</span>
          <input aria-label="Phase" defaultValue="0 %" className="block h-[13px] w-full border border-[#1a1b1f] bg-[#2b2c31] pr-1 text-center text-[11px] outline-none" />
          <div className="mt-1 flex items-center justify-between">
            <PadButton className="w-[27px]">Hold</PadButton>
            <button className="size-[13px] rounded-full bg-[#2b2c31] text-[11px] leading-[13px]">R</button>
          </div>
        </div>
      </div>
    </section>
  );
}

function DeviceView() {
  return (
    <div className="mt-2 flex h-[196px] shrink-0">
      <section className="w-28 shrink-0 rounded-r-md bg-[#222227] py-1 pr-[3px]">
        <div className="h-full overflow-hidden bg-[#3a3b3f] text-[10px] leading-[15px] font-medium whitespace-nowrap">
          <div className="mb-0.5 h-[17px] bg-[#42454c]" />
          <p>s the current spacing</p>
          <p>s. You can use these</p>
          <p>o work with the editing</p>
          <p className="mt-[30px]">Grid</p>
          <p>rid</p>
          <p>rid</p>
          <p>de Grid</p>
          <p>oom-Adaptive and</p>
        </div>
      </section>
      <section className="ml-2 flex min-w-0 flex-1 rounded-l-md bg-[#222227] py-1 pl-1">
        <LevelStrip />
        <Utility />
        <LevelStrip />
        <Lfo />
        <LevelStrip />
        <div className="flex min-w-0 flex-1 items-center justify-center bg-[#3a3b3f] pl-[84px] text-[11px] font-medium">Drop Audio Effects Here</div>
      </section>
    </div>
  );
}

function StatusBar() {
  return (
    <footer className="flex h-[38px] shrink-0">
      <div className="mt-[9px] flex h-5 min-w-0 flex-1 items-center rounded-r border-2 border-l-0 border-[#222227] bg-[#36373b] text-[11px] font-medium">k 6.3.1 (Time: 0:11)</div>
      <div className="mt-[9px] ml-[11px] h-5 w-[204px] shrink-0 rounded border-2 border-[#1c1d21] bg-[#434449]">
        <svg viewBox="0 0 200 16" className="h-4 w-[200px] fill-[#17181b]">
          <path d="M0 4.5H200V5.5H0ZM0 11.5H200V12.5H0Z" />
          <path d="M4 5L20 3.5L34 3L48 3.5L60 4.5L90 5L60 5.5L48 6.5L34 7L20 6.5ZM4 12L20 10.5L34 10L48 10.5L60 11.5L110 12L60 12.5L48 13.5L34 14L20 13.5Z" />
        </svg>
      </div>
      <div className="ml-2 flex h-[30px] w-5 shrink-0 items-center bg-[#1c1d21] pt-2 pl-0.5 text-[11px] font-bold whitespace-nowrap">4-A</div>
    </footer>
  );
}

export default function App() {
  return (
    <div className="flex h-screen flex-col overflow-hidden bg-[#303035] font-['Roboto','Liberation_Sans',sans-serif] text-[#dedfe4]">
      <Toolbar />
      <div className="flex min-h-0 flex-1">
        <Browser />
        <Arrangement />
      </div>
      <DeviceView />
      <StatusBar />
    </div>
  );
}
